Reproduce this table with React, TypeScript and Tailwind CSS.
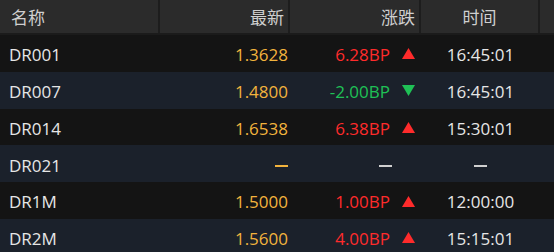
const rows = [
  { name: "DR001", price: "1.3628", chg: "6.28BP", dir: "up", time: "16:45:01" },
  { name: "DR007", price: "1.4800", chg: "-2.00BP", dir: "down", time: "16:45:01" },
  { name: "DR014", price: "1.6538", chg: "6.38BP", dir: "up", time: "15:30:01" },
  { name: "DR021", price: "", chg: "", dir: "", time: "" },
  { name: "DR1M", price: "1.5000", chg: "1.00BP", dir: "up", time: "12:00:00" },
  { name: "DR2M", price: "1.5600", chg: "4.00BP", dir: "up", time: "15:15:01" },
];

function Arrow({ dir }: { dir: string }) {
  if (dir === "up")
    return (
      <svg width="13" height="11" viewBox="0 0 13 11" className="ml-[12px] -translate-y-[1px]">
        <polygon points="6.5,0 13,11 0,11" fill="#ff2b2b" />
      </svg>
    );
  if (dir === "down")
    return (
      <svg width="13" height="11" viewBox="0 0 13 11" className="ml-[12px] -translate-y-[1px]">
        <polygon points="0,0 13,0 6.5,11" fill="#1fc156" />
      </svg>
    );
  return null;
}

function Dash({ color }: { color: string }) {
  return <span className={`block h-[2px] w-[13px] translate-y-[1px] ${color}`} />;
}

export default function App() {
  return (
    <div
      className="w-[554px] h-[252px] overflow-hidden bg-[#141414] text-[17px]"
      style={{ fontFamily: '"Open Sans", "Noto Sans CJK SC", sans-serif' }}
    >
      <div className="flex h-[35px] bg-[#2b2b2b] border-b-2 border-[#1b1b1b] text-[#cfcfcf] leading-none">
        <div className="w-[160px] border-r-2 border-[#1d1d1d] pl-[11px] pt-[1px] flex items-center">名称</div>
        <div className="w-[130px] border-r-2 border-[#1d1d1d] pr-[4px] pt-[1px] flex items-center justify-end">最新</div>
        <div className="w-[131px] border-r-2 border-[#1d1d1d] pr-[4px] pt-[1px] flex items-center justify-end">涨跌</div>
        <div className="w-[119px] border-r-2 border-[#1d1d1d] pt-[1px] flex items-center justify-center">时间</div>
        <div className="flex-1" />
      </div>
      {rows.map((r, i) => (
        <div
          key={r.name}
          className={`flex h-[36.8px] items-center pt-[3px] ${i % 2 === 1 ? "bg-[#1b212b]" : "bg-[#141414]"}`}
        >
          <div className="w-[160px] pl-[9px] text-[#e6e6e6]">{r.name}</div>
          <div className="w-[130px] pr-[2px] flex items-center justify-end text-[#f2b33d]">
            {r.price || <Dash color="bg-[#f2b33d]" />}
          </div>
          <div className="w-[131px] pr-[6px] flex items-center justify-end">
            {r.chg ? (
              <>
                <span className={r.dir === "up" ? "text-[#ff2b2b]" : "text-[#1fc156]"}>{r.chg}</span>
                <Arrow dir={r.dir} />
              </>
            ) : (
              <span className="mr-[23px]">
                <Dash color="bg-[#d0d0d0]" />
              </span>
            )}
          </div>
          <div className="w-[119px] flex items-center justify-center text-[#e6e6e6]">
            {r.time || <Dash color="bg-[#d0d0d0]" />}
          </div>
        </div>
      ))}
    </div>
  );
}
